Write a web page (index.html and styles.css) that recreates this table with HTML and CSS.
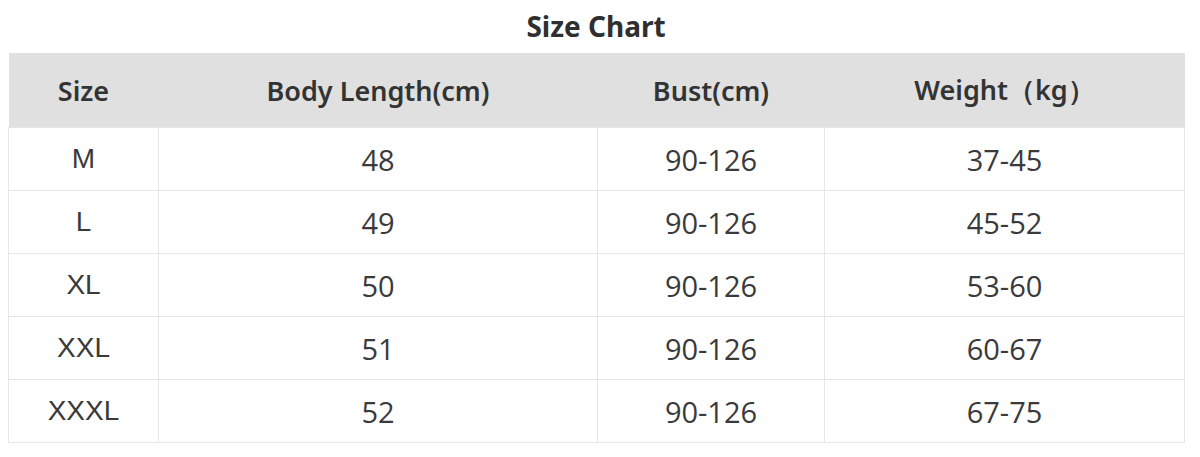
FILE: index.html
```html
<!DOCTYPE html>
<html>
<head>
<meta charset="utf-8">
<link rel="stylesheet" href="styles.css">
</head>
<body>
<div class="chart">
  <h1 class="title">Size Chart</h1>
  <table class="sizes">
    <colgroup>
      <col class="c1"><col class="c2"><col class="c3"><col class="c4">
    </colgroup>
    <thead>
      <tr><th>Size</th><th>Body Length(cm)</th><th>Bust(cm)</th><th>Weight（kg）</th></tr>
    </thead>
    <tbody>
      <tr><td class="sz">M</td><td>48</td><td>90-126</td><td>37-45</td></tr>
      <tr><td class="sz">L</td><td>49</td><td>90-126</td><td>45-52</td></tr>
      <tr><td class="sz">XL</td><td>50</td><td>90-126</td><td>53-60</td></tr>
      <tr><td class="sz">XXL</td><td>51</td><td>90-126</td><td>60-67</td></tr>
      <tr><td class="sz">XXXL</td><td>52</td><td>90-126</td><td>67-75</td></tr>
    </tbody>
  </table>
</div>
</body>
</html>
```
FILE: styles.css
```css
html, body {
  margin: 0;
  background: #ffffff;
}
body {
  padding: 0 8px;
  color: #333333;
}
.chart {
  width: 1176px;
}
.title {
  margin: 0;
  height: 53px;
  line-height: 52px;
  text-align: center;
  font-family: "Noto Sans", sans-serif;
  font-weight: 700;
  font-size: 28px;
  color: #2f2f2f;
}
.sizes {
  width: 1176px;
  border-collapse: collapse;
  table-layout: fixed;
}
.c1 { width: 150px; }
.c2 { width: 439px; }
.c3 { width: 227px; }
.c4 { width: 360px; }
.sizes th {
  height: 74px;
  padding: 0;
  background: #e0e0e0;
  font-family: "Noto Sans", sans-serif;
  font-weight: 600;
  font-size: 27px;
  color: #333333;
  text-align: center;
}
.sizes td {
  height: 62px;
  padding: 0;
  border: 1px solid #e6e6e6;
  font-family: "Open Sans", sans-serif;
  font-size: 29px;
  color: #3a3a3a;
  text-align: center;
}
.sizes td.sz {
  font-family: "Liberation Sans", Arial, sans-serif;
  font-size: 28px;
}
```
